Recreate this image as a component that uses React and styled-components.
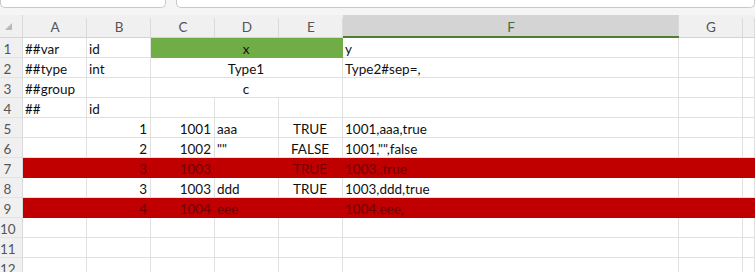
import React from 'react'
import styled, { createGlobalStyle } from 'styled-components'

const GlobalStyle = createGlobalStyle`
    html, body {
        margin: 0;
        padding: 0;
        overflow: hidden;
        background: #ffffff;
    }
`

const Container = styled.div`
    font-family: Lato, "Open Sans", sans-serif;
    width: 755px;
`

const FormulaBar = styled.div`
    display: flex;
    gap: 10px;
    height: 15px;
    background: #f5f5f5;
`

const InputBox = styled.div`
    box-sizing: border-box;
    height: 8px;
    width: ${p => p.width || 'auto'};
    flex: ${p => (p.grow ? 1 : 'none')};
    background: #ffffff;
    border: 1px solid #c9c9c9;
    border-top: none;
    border-radius: 0 0 5px 5px;
`

const Sheet = styled.div`
    display: grid;
    grid-template-columns: 23px repeat(5, 64px) 336px 64px 1fr;
    grid-auto-rows: 20px;
    grid-template-rows: 23px;
`

const Corner = styled.div`
    box-sizing: border-box;
    background: #f0f0f0;
    border-right: 1px solid #d9d9d9;
    border-bottom: 1px solid #d4d4d4;
    display: flex;
    align-items: flex-end;
    padding: 0 0 7px 5px;
`

const ColHead = styled.div`
    box-sizing: border-box;
    background: ${p => (p.active ? '#d4d4d4' : '#f0f0f0')};
    color: ${p => (p.active ? '#3b6e3f' : '#555555')};
    border-bottom: ${p => (p.active ? '2px solid #4f7f34' : '1px solid #d4d4d4')};
    font-size: 13.5px;
    text-align: center;
    line-height: 22px;
    padding-top: 1px;
    position: relative;

    &::after {
        content: '';
        position: absolute;
        right: 0;
        top: 3px;
        bottom: 0;
        width: 1px;
        background: #dadada;
    }
`

const RowHead = styled.div`
    box-sizing: border-box;
    background: #f0f0f0;
    color: #555555;
    border-right: 1px solid #d9d9d9;
    border-bottom: 1px solid #e3e3e3;
    font-size: 13.5px;
    line-height: 16px;
    padding: 3px 7px 0 0;
    text-align: center;
`

const fills = {
    green: '#70ad47',
    red: '#c00000',
}

const Cell = styled.div`
    box-sizing: border-box;
    grid-column: span ${p => p.span || 1};
    background: ${p => fills[p.fill] || '#ffffff'};
    border-right: 1px solid ${p => fills[p.fill] || '#e1e1e1'};
    border-bottom: 1px solid ${p => fills[p.fill] || '#e1e1e1'};
    color: ${p => (p.fill === 'red' ? '#720000' : '#111111')};
    font-size: 13.5px;
    line-height: 16px;
    padding: 3px 3px 0 2px;
    text-align: ${p => p.align || 'left'};
    white-space: nowrap;
    overflow: hidden;
`

const columns = ['A', 'B', 'C', 'D', 'E', 'F', 'G', '']

// each row: cells for A..H, merged cells carry a span
const rows = [
    { cells: [{ t: '##var' }, { t: 'id' }, { t: 'x', span: 3, align: 'center', fill: 'green' }, { t: 'y' }, {}, {}] },
    { cells: [{ t: '##type' }, { t: 'int' }, { t: 'Type1', span: 3, align: 'center' }, { t: 'Type2#sep=,' }, {}, {}] },
    { cells: [{ t: '##group' }, {}, { t: 'c', span: 3, align: 'center' }, {}, {}, {}] },
    { cells: [{ t: '##' }, { t: 'id' }, {}, {}, {}, {}, {}, {}] },
    { cells: [{}, { t: '1', align: 'right' }, { t: '1001', align: 'right' }, { t: 'aaa' }, { t: 'TRUE', align: 'center' }, { t: '1001,aaa,true' }, {}, {}] },
    { cells: [{}, { t: '2', align: 'right' }, { t: '1002', align: 'right' }, { t: '""' }, { t: 'FALSE', align: 'center' }, { t: '1001,"",false' }, {}, {}] },
    { fill: 'red', cells: [{}, { t: '3', align: 'right' }, { t: '1003', align: 'right' }, {}, { t: 'TRUE', align: 'center' }, { t: '1003,,true' }, {}, {}] },
    { cells: [{}, { t: '3', align: 'right' }, { t: '1003', align: 'right' }, { t: 'ddd' }, { t: 'TRUE', align: 'center' }, { t: '1003,ddd,true' }, {}, {}] },
    { fill: 'red', cells: [{}, { t: '4', align: 'right' }, { t: '1004', align: 'right' }, { t: 'eee' }, {}, { t: '1004,eee,' }, {}, {}] },
    { cells: [{}, {}, {}, {}, {}, {}, {}, {}] },
    { cells: [{}, {}, {}, {}, {}, {}, {}, {}] },
    { cells: [{}, {}, {}, {}, {}, {}, {}, {}] },
]

const App = () => {
    return (
        <Container>
            <GlobalStyle />
            <FormulaBar>
                <InputBox width="166px" />
                <InputBox grow />
            </FormulaBar>
            <Sheet>
                <Corner>
                    <svg width="7" height="7" viewBox="0 0 7 7">
                        <polygon points="7,0 7,7 0,7" fill="#b9b9b9" />
                    </svg>
                </Corner>
                {columns.map((c, i) => (
                    <ColHead key={i} active={c === 'F'}>{c}</ColHead>
                ))}
                {rows.map((row, r) => (
                    <React.Fragment key={r}>
                        <RowHead>{r + 1}</RowHead>
                        {row.cells.map((cell, i) => (
                            <Cell
                                key={i}
                                span={cell.span}
                                align={cell.align}
                                fill={cell.fill || row.fill}
                            >
                                {cell.t}
                            </Cell>
                        ))}
                    </React.Fragment>
                ))}
            </Sheet>
        </Container>
    )
}

export default App
